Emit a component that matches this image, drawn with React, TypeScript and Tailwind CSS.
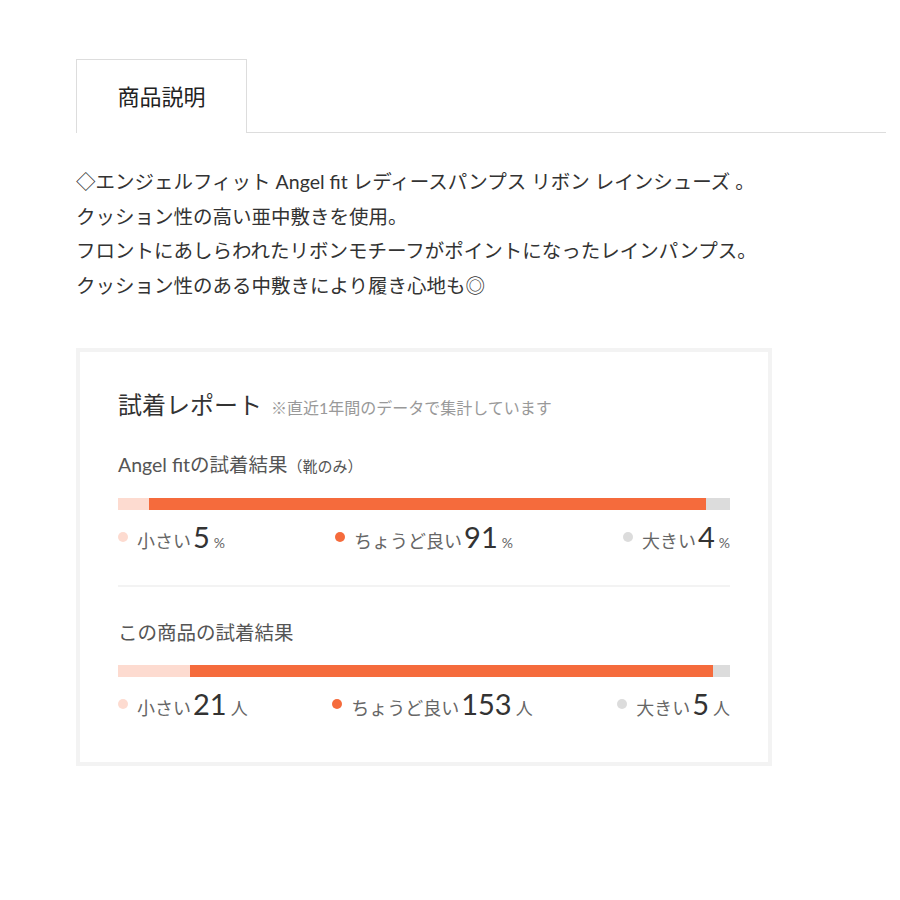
const FONT = '[font-family:Lato,"Noto_Sans_CJK_JP",sans-serif]';

type Item = { label: string; value: number; unit: string; dot: string };

const FitResult = (props: { title: React.ReactNode; items: Item[] }) => {
  const total = props.items.reduce((s, i) => s + i.value, 0);
  const colors = ['bg-[#fddbd0]', 'bg-[#f56b3c]', 'bg-[#dcdcdc]'];

  return (
    <div>
      <h3 className="text-[19.5px] leading-[30px] text-[#555]">{props.title}</h3>
      <div className="mt-[17px] flex h-[12px] w-full">
        {props.items.map((item, i) => (
          <div
            key={item.label}
            className={`h-full ${colors[i]}`}
            style={{ width: `${(item.value / total) * 100}%` }}
          />
        ))}
      </div>
      <div className="mt-[9px] flex items-center justify-between">
        {props.items.map((item) => (
          <div key={item.label} className="flex items-baseline">
            <span
              className={`mr-[9px] inline-block h-[10px] w-[10px] self-center rounded-full ${item.dot}`}
            ></span>
            <span className="text-[18px] text-[#666]">{item.label}</span>
            <span className="ml-[2px] text-[29px] leading-[36px] text-[#333]">
              {item.value}
            </span>
            <span
              className={`ml-[4px] text-[#666] ${item.unit === '%' ? 'text-[14px]' : 'text-[17px]'}`}
            >
              {item.unit}
            </span>
          </div>
        ))}
      </div>
    </div>
  );
};

const App = () => {
  return (
    <div className={`min-h-[900px] bg-white pt-[59px] pl-[76px] pr-[14px] ${FONT}`}>
      <div className="flex border-b border-[#dddddd]">
        <div className="-mb-px flex h-[74px] w-[171px] items-center justify-center border border-b-0 border-[#dddddd] bg-white text-[22px] text-[#222]">
          商品説明
        </div>
      </div>

      <div className="mt-[32px] text-[19.5px] leading-[34.5px] text-[#333]">
        <p>◇エンジェルフィット Angel fit レディースパンプス リボン レインシューズ 。</p>
        <p>クッション性の高い亜中敷きを使用。</p>
        <p>フロントにあしらわれたリボンモチーフがポイントになったレインパンプス。</p>
        <p>クッション性のある中敷きにより履き心地も◎</p>
      </div>

      <div className="mt-[45px] w-[696px] border-4 border-[#f3f3f3] px-[38px] pt-[36px] pb-[40px]">
        <div className="flex items-baseline">
          <h2 className="text-[24px] leading-[34px] text-[#333]">試着レポート</h2>
          <span className="ml-[9px] text-[16px] text-[#999]">
            ※直近1年間のデータで集計しています
          </span>
        </div>

        <div className="mt-[28px]">
          <FitResult
            title={
              <>
                Angel fitの試着結果<span className="text-[15px]">（靴のみ）</span>
              </>
            }
            items={[
              { label: '小さい', value: 5, unit: '%', dot: 'bg-[#fddbd0]' },
              { label: 'ちょうど良い', value: 91, unit: '%', dot: 'bg-[#f56b3c]' },
              { label: '大きい', value: 4, unit: '%', dot: 'bg-[#dcdcdc]' },
            ]}
          />
        </div>

        <div className="mt-[30px] mb-[31px] h-[2px] bg-[#f3f3f3]"></div>

        <FitResult
          title="この商品の試着結果"
          items={[
            { label: '小さい', value: 21, unit: '人', dot: 'bg-[#fddbd0]' },
            { label: 'ちょうど良い', value: 153, unit: '人', dot: 'bg-[#f56b3c]' },
            { label: '大きい', value: 5, unit: '人', dot: 'bg-[#dcdcdc]' },
          ]}
        />
      </div>
    </div>
  );
};

export default App;
